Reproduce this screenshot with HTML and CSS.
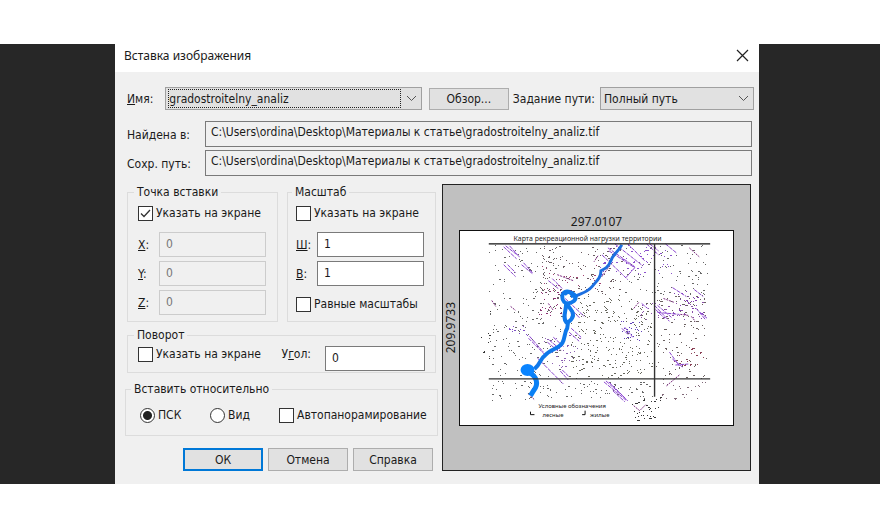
FILE: index.html
```
<!DOCTYPE html>
<html lang="ru">
<head>
    <meta charset="UTF-8">
    <meta name="viewport" content="width=device-width, initial-scale=1.0">
    <title>Вставка изображения</title>
    <link rel="stylesheet" href="styles.css">
</head>
<body>
    <main class="desktop">
        <form class="dialog">
            <header class="titlebar">
                <h1>Вставка изображения</h1>
                <button type="button" class="close" aria-label="Закрыть">
                    <svg width="13" height="13" viewBox="0 0 13 13"><path d="M1 1L12 12M12 1L1 12"/></svg>
                </button>
            </header>

            <div class="content">
                <div class="name-row">
                    <label for="name"><u>И</u>мя:</label>
                    <div class="select name-select">
                        <select id="name"><option>gradostroitelny_analiz</option></select>
                        <svg width="11" height="7" viewBox="0 0 11 7"><path d="M1 1L5.500 5.500L10 1"/></svg>
                    </div>
                    <button type="button" class="btn">Обзор...</button>
                    <label for="pathType" class="path-label">Задание пути:</label>
                    <div class="select path-select">
                        <select id="pathType"><option>Полный путь</option></select>
                        <svg width="11" height="7" viewBox="0 0 11 7"><path d="M1 1L5.500 5.500L10 1"/></svg>
                    </div>
                </div>

                <div class="paths">
                    <label for="found">Найдена в:</label>
                    <input id="found" type="text" readonly value="C:\Users\ordina\Desktop\Материалы к статье\gradostroitelny_analiz.tif">
                    <label for="saved">Сохр. путь:</label>
                    <input id="saved" type="text" readonly value="C:\Users\ordina\Desktop\Материалы к статье\gradostroitelny_analiz.tif">
                </div>

                <div class="columns">
                    <div class="settings">
                        <div class="pair">
                            <fieldset class="group">
                                <legend>Точка вставки</legend>
                                <label class="check"><input type="checkbox" checked>Указать на экране</label>
                                <div class="fields">
                                    <label for="x"><u>X</u>:</label>
                                    <input id="x" type="text" value="0" disabled>
                                    <label for="y"><u>Y</u>:</label>
                                    <input id="y" type="text" value="0" disabled>
                                    <label for="z"><u>Z</u>:</label>
                                    <input id="z" type="text" value="0" disabled>
                                </div>
                            </fieldset>
                            <fieldset class="group">
                                <legend>Масштаб</legend>
                                <label class="check"><input type="checkbox">Указать на экране</label>
                                <div class="fields">
                                    <label for="w"><u>Ш</u>:</label>
                                    <input id="w" type="text" value="1">
                                    <label for="h"><u>В</u>:</label>
                                    <input id="h" type="text" value="1">
                                </div>
                                <label class="check equal"><input type="checkbox">Равные масштабы</label>
                            </fieldset>
                        </div>

                        <fieldset class="group rotation">
                            <legend>Поворот</legend>
                            <div class="rotation-row">
                                <label class="check"><input type="checkbox">Указать на экране</label>
                                <label for="angle">У<u>г</u>ол:</label>
                                <input id="angle" type="text" value="0">
                            </div>
                        </fieldset>

                        <fieldset class="group relative">
                            <legend>Вставить относительно</legend>
                            <div class="relative-row">
                                <label class="check"><input type="radio" name="rel" checked>ПСК</label>
                                <label class="check"><input type="radio" name="rel">Вид</label>
                                <label class="check"><input type="checkbox">Автопанорамирование</label>
                            </div>
                        </fieldset>

                        <div class="actions">
                            <button type="submit" class="btn primary">ОК</button>
                            <button type="button" class="btn">Отмена</button>
                            <button type="button" class="btn">Справка</button>
                        </div>
                    </div>

                    <div class="preview">
                        <span class="dim-width">297.0107</span>
                        <span class="dim-height">209.9733</span>
                        <svg class="map" viewBox="0 0 275 195">
                            <text class="map-title" x="54" y="10">Карта рекреационной нагрузки территории</text>
                            <g id="specks" shape-rendering="crispEdges"></g>
                            <!-- кварталы -->
                            <path class="blocks" d="M44 16l13 12M46 15l14 11M50 15l8 9M44 34l12 12M48 34l8 8M62 34l11 9M64 32l9 10M143 24l26 25M149 17l27 19M156 13l28 22M169 13l17 17M150 20l26 17M176 37l-9 10M188 13l12 11M191 13l9 7M207 13l11 9M89 50l10 8M93 48l10 10M214 57l14 9M236 59l9 7M183 73l6 5M196 75l15 16M199 75l14 12M197 79l9 9M199 82l22 2M238 78l9 11M242 82l7 6M69 108l16 16M70 106l14 16M88 112l11 9M90 110l12 10M94 107l11 10M112 98l10 9M110 102l10 9M78 128l26 26M101 141l8 9M103 140l7 7M163 98l7 7M166 97l8 10M145 152l23 19M147 151l19 17M150 152l19 19M154 161l12 11M211 122l10 14M214 129l10 8M217 135l13-1M106 68l19 18M107 74l14 14"/>
                            <path class="blocks-dark" d="M98 44l16 6M151 35l-9 12M139 25l-4 6M89 73l5 7M51 76l5 4M32 70l4 6M205 68l11 4M222 84l8 1M233 86l4 5M180 72l-5 6M208 156l13-11M69 164l6 6M175 176l6 5l6-6M231 17l10 9"/>
                            <path class="river-thin" d="M163 14C158 23 154 23 152 30C149 37 146 38 142 40C142 47 138 50 133 56C128 62 121 63 114 67"/>
                            <path class="river" d="M114 67C112 58 103 60 103 66C103 71 106 73 109 73C113 72 118 70 116 65C112 61 108 60 105 64M107 72C107 81 103 87 107 92C110 92 116 87 113 81L108 74M109 91L108 98C105 102 106 108 103 113C99 119 91 119 86 125C80 129 82 133 75 139"/>
                            <path class="river-wide" d="M64 141L74 139M69 142C77 146 80 154 74 161L71 166"/>
                            <ellipse class="lake" cx="68" cy="140" rx="7" ry="6"/>
                            <!-- рамка карты -->
                            <path class="frame-top" d="M29 13H252"/>
                            <path class="frame" d="M29 149H252M196 13V167"/>
                            <text class="map-legend" x="79" y="178">Условные обозначения</text>
                            <text class="map-legend" x="83" y="187">лесные</text>
                            <text class="map-legend" x="131" y="187">жилые</text>
                            <path class="marks" d="M71 182v3h4M123 185h3v-4"/>
                        </svg>
                    </div>
                </div>
            </div>
        </form>
    </main>

    <script src="map.js"></script>
</body>
</html>
```
FILE: map.js
```
// Мелкие объекты на карте: [x, y, ширина, высота, количество, цвет]
const areas = [
    [29, 15, 74, 50, 80, '#666666'],
    [80, 16, 85, 50, 110, '#6a5a60'],
    [29, 65, 74, 83, 130, '#666666'],
    [110, 65, 84, 84, 260, '#66665c'],
    [165, 15, 85, 50, 90, '#666666'],
    [197, 65, 51, 84, 120, '#6a6060'],
    [19, 30, 12, 135, 9, '#333333'],
    [29, 152, 45, 18, 25, '#666666'],
    [80, 152, 115, 16, 70, '#666666'],
    [198, 152, 50, 18, 24, '#806878'],
    [173, 168, 30, 24, 35, '#333333'],
    [215, 60, 32, 30, 30, '#8040b0'],
    [215, 118, 30, 18, 24, '#8a3f55'],
    [182, 72, 65, 18, 40, '#8a50a8'],
    [140, 14, 75, 30, 60, '#8a50cc'],
    [80, 58, 22, 28, 30, '#8a3070'],
    [48, 95, 26, 10, 12, '#8050c8'],
    [84, 105, 38, 32, 40, '#8a60b0'],
    [162, 90, 20, 20, 26, '#6040b8'],
    [80, 35, 60, 25, 25, '#a04070']
];

let seed = 7;
function random() {
    seed = (seed * 16807) % 2147483647;
    return seed / 2147483647;
}

const group = document.getElementById('specks');
areas.forEach(function([x, y, w, h, count, color]) {
    let d = '';
    for (let i = 0; i < count; i++) {
        const px = Math.round(x + random() * w);
        const py = Math.round(y + random() * h);
        const len = random() > 0.75 ? 2 : 1;
        d += 'M' + px + ' ' + py + 'l' + len + ' ' + (random() > 0.7 ? 1 : 0);
    }
    const path = document.createElementNS('http://www.w3.org/2000/svg', 'path');
    path.setAttribute('d', d);
    path.setAttribute('stroke', color);
    group.appendChild(path);
});
```
FILE: styles.css
```
* {
    box-sizing: border-box;
}
body {
    margin: 0;
    padding: 44px 0;
    background-color: #fff;
    font-family: "DejaVu Sans Condensed", "Noto Sans", sans-serif;
    font-size: 12px;
    line-height: 16px;
    color: #1a1a1a;
}
input, select, button {
    font: inherit;
    color: inherit;
}
.desktop {
    background-color: #272727;
    padding: 0 121px 0 115px;
}
.dialog {
    background-color: #f0f0f0;
    padding-bottom: 13px;
}
.titlebar {
    display: flex;
    align-items: center;
    justify-content: space-between;
    height: 28px;
    padding: 0 10px 5px 9px;
    background-color: #fff;
}
h1 {
    margin: 0;
    font-family: "Noto Sans", sans-serif;
    font-size: 12px;
    font-weight: normal;
}
.close {
    display: flex;
    padding: 0;
    border: none;
    background: none;
}
.close path {
    stroke: #222;
    stroke-width: 1.200;
}
.content {
    padding: 15px 5px 0 12px;
}
.name-row {
    display: flex;
    align-items: center;
}
.select {
    display: flex;
    align-items: center;
    height: 23px;
    padding: 3px;
    background-color: #e1e1e1;
    border: 1px solid #a0a0a0;
}
.select select {
    flex: 1;
    min-width: 0;
    height: 17px;
    padding: 0;
    border: none;
    background: none;
    appearance: none;
}
.select svg {
    fill: none;
    stroke: #555;
    margin: 0 1px 0 6px;
}
.name-select {
    flex: 1;
    margin: 0 7px 0 12px;
}
.name-select select {
    outline: 1px dotted #222;
}
.path-label {
    margin: 0 5px 0 4px;
}
.path-select {
    width: 154px;
}
.btn {
    width: 80px;
    height: 22px;
    padding: 0;
    background-color: #e1e1e1;
    border: 1px solid #adadad;
}
.actions .btn {
    height: 23px;
}
.btn.primary {
    border: 2px solid #0078d7;
}
.paths {
    display: grid;
    grid-template-columns: 78px 1fr;
    align-items: end;
    row-gap: 3px;
    margin: 11px 2px 8px 0;
}
.paths label {
    padding-bottom: 4px;
}
input[type="text"] {
    width: 100%;
    height: 25px;
    padding: 0 6px 2px;
    border: 1px solid #7a7a7a;
    background-color: #fff;
}
.paths input[type="text"] {
    height: 26px;
    padding: 0 5px 4px;
    background-color: #f0f0f0;
}
input[type="text"]:disabled {
    color: #777;
    background-color: #f0f0f0;
    border-color: #ccc;
}
.columns {
    display: grid;
    grid-template-columns: 311px 1fr;
    column-gap: 4px;
    padding-right: 3px;
}
.pair {
    display: grid;
    grid-template-columns: 151px 149px;
    gap: 9px;
}
.group {
    min-width: 0;
    margin: 0;
    padding: 5px 11px 6px 10px;
    border: 1px solid #dcdcdc;
}
.pair .group + .group {
    padding-left: 8px;
}
legend {
    margin-left: -4px;
    padding: 0 3px;
}
.check {
    display: flex;
    align-items: center;
    height: 16px;
    gap: 3px;
    white-space: nowrap;
}
.check input {
    appearance: none;
    flex: none;
    width: 15px;
    height: 15px;
    margin: 0;
    border: 1px solid #333;
    background-color: #fff;
}
.check input[type="checkbox"]:checked {
    background-image: url("data:image/svg+xml,%3Csvg xmlns='http://www.w3.org/2000/svg' viewBox='0 0 13 13'%3E%3Cpath d='M2 6.500L5 9.500L11 3' fill='none' stroke='%23333' stroke-width='1.300'/%3E%3C/svg%3E");
}
.check input[type="radio"] {
    border-radius: 50%;
}
.check input[type="radio"]:checked {
    background-image: radial-gradient(circle, #222 4px, transparent 5px);
}
.fields {
    display: grid;
    grid-template-columns: 21px 1fr;
    align-items: center;
    row-gap: 4px;
    margin-top: 11px;
}
.equal {
    margin-top: 10px;
}
.rotation {
    margin: 5px 2px 0 0;
    padding: 3px 10px 1px;
}
.rotation-row {
    display: grid;
    grid-template-columns: 1fr auto 100px;
    align-items: start;
    column-gap: 14px;
}
.relative {
    margin: 8px 0 0 -2px;
    padding: 10px 11px 12px 14px;
}
.relative legend {
    margin-left: -9px;
}
.relative-row {
    display: grid;
    grid-template-columns: 70px 69px 1fr;
}
.actions {
    display: flex;
    justify-content: flex-end;
    gap: 5px;
    margin: 12px 5px 0 0;
}
.preview {
    display: grid;
    grid-template-columns: 16px 1fr 16px;
    grid-template-rows: 45px auto 1fr;
    background-color: #c0c0c0;
    border: 1px solid #222;
    font-family: "Noto Sans", sans-serif;
}
.dim-width {
    grid-column: 2;
    align-self: end;
    text-align: center;
}
.dim-height {
    grid-column: 1;
    grid-row: 2;
    justify-self: center;
    align-self: center;
    writing-mode: vertical-rl;
    transform: rotate(180deg);
}
.map {
    grid-column: 2;
    grid-row: 2;
    width: 100%;
    background-color: #fff;
    border: 1px solid #111;
}
.map path {
    fill: none;
}
.map-title {
    font-size: 7px;
    fill: #222;
}
.map-legend {
    font-size: 6px;
    fill: #222;
}
.map .blocks {
    stroke: #8a45cf;
    stroke-dasharray: 4 1;
}
.map .blocks-dark {
    stroke: #7b2a80;
    stroke-dasharray: 2 1;
}
.river-thin {
    stroke: #1d6fe0;
    stroke-width: 3;
}
.river {
    stroke: #0f78ea;
    stroke-width: 4;
}
.river-wide {
    stroke: #0a80f5;
    stroke-width: 5;
}
.lake {
    fill: #0a84ff;
}
.frame-top {
    stroke: #111;
    stroke-width: 1.400;
}
.frame {
    stroke: #333;
    stroke-width: 1.400;
}
.marks {
    stroke: #111;
}
```
